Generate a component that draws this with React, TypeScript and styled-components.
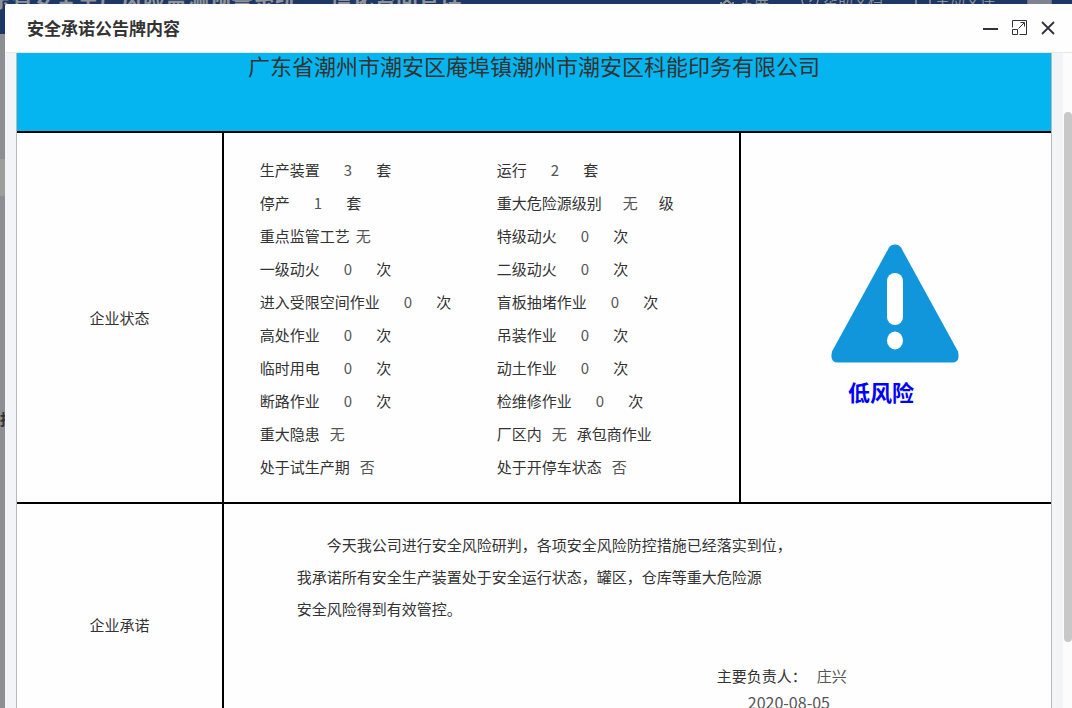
import React from "react";
import styled, { createGlobalStyle } from "styled-components";

const GlobalStyle = createGlobalStyle`
  * { box-sizing: border-box; }
  body {
    margin: 0;
    overflow: hidden;
    font-family: "Noto Sans CJK SC", "Noto Sans", sans-serif;
    font-size: 15px;
    color: #333;
  }
`;

const Screen = styled.div`
  position: relative;
  height: 100vh;
  overflow: hidden;
  background: #8d8e93;
`;

const TopBar = styled.header`
  display: flex;
  align-items: flex-start;
  justify-content: space-between;
  height: 34px;
  background: #1d3866;
  color: #8e9299;
  white-space: nowrap;
`;

const SystemName = styled.div`
  display: flex;
  gap: 33px;
  margin: -15px 0 0 -11px;
  font-size: 22px;
  line-height: 24px;
  font-weight: 700;
`;

const TopLinks = styled.nav`
  display: flex;
  gap: 32px;
  margin-top: -10px;
  padding-right: 20px;
  line-height: 20px;
`;

const TopLink = styled.a`
  display: flex;
  align-items: center;
  gap: 4px;
  color: inherit;
  text-decoration: none;
`;

const Avatar = styled.span`
  width: 25px;
  height: 20px;
  border: 1px solid #5d6f90;
  border-radius: 4px;
  background: #7d838f;
`;

const PageStripe = styled.div`
  height: 37px;
  margin-top: 125px;
  background: #9d9d9c;
`;

const PageLabel = styled.div`
  margin-top: 211px;
  line-height: 24px;
  font-weight: 700;
`;

const Dialog = styled.section`
  position: absolute;
  inset: 4px 0 0 5px;
  display: flex;
  flex-direction: column;
  background: #fefefe;
  border-top-left-radius: 2px;
  overflow: hidden;
`;

const TitleBar = styled.header`
  display: flex;
  flex: none;
  align-items: center;
  justify-content: space-between;
  height: 49px;
  padding: 0 15px 0 22px;
  border-bottom: 1px solid #e8e8e8;
`;

const Title = styled.h1`
  margin: 0;
  font-size: 17px;
  line-height: 24px;
  font-weight: 700;
`;

const WindowActions = styled.div`
  display: flex;
  gap: 13px;
`;

const IconButton = styled.button`
  display: flex;
  width: 16px;
  height: 16px;
  padding: 0;
  border: 0;
  background: none;
  color: #33303f;
`;

const DialogBody = styled.div`
  display: flex;
  flex: 1;
  min-height: 0;
  background: #f3f4f7;
`;

const Content = styled.main`
  flex: 1;
  min-width: 0;
  padding: 0 11px;
  overflow: hidden;
`;

const ScrollTrack = styled.div`
  flex: none;
  width: 9px;
  padding: 59px 0 0 1px;
  background: #fcfcfc;
`;

const ScrollThumb = styled.div`
  height: 530px;
  border-radius: 4px;
  background: #c8c8c8;
`;

const Board = styled.table`
  width: 100%;
  table-layout: fixed;
  border-collapse: separate;
  border-spacing: 0;
  border: 1px solid #b9b9b9;
  border-width: 0 1px;
  background: #fefefe;
`;

const Company = styled.th`
  height: 80px;
  padding: 0;
  border-bottom: 2px solid #000;
  background: #04b5f0;
  vertical-align: top;
  font-size: 22px;
  line-height: 24px;
  font-weight: 400;
`;

const RowLabel = styled.th`
  padding: 0;
  border: 0 solid #000;
  border-width: 0 2px 2px 0;
  font-weight: 400;
`;

const StatusCell = styled.td`
  padding: 20px 5px 19px 36px;
  border: 0 solid #000;
  border-width: 0 2px 2px 0;
`;

const StatusGrid = styled.div`
  display: grid;
  grid-template-columns: 1fr 1fr;
`;

const gaps = { wide: 24, medium: 21, small: 10, tiny: 6 };

const StatusItem = styled.div<{ $gap: keyof typeof gaps }>`
  display: flex;
  gap: ${(p) => gaps[p.$gap]}px;
  line-height: 33px;
  white-space: nowrap;
`;

const Value = styled.span`
  color: #555;
`;

const RiskCell = styled.td`
  padding: 15px 2px 0 0;
  border-bottom: 2px solid #000;
`;

const Risk = styled.div`
  display: flex;
  flex-direction: column;
  align-items: center;
  gap: 12px;
`;

const RiskLevel = styled.strong`
  padding-right: 28px;
  color: #00f;
  font-size: 22px;
  line-height: 32px;
  font-weight: 700;
`;

const PromiseCell = styled.td`
  padding: 25px 0 29px 73px;
  border-bottom: 2px solid #000;
`;

const Promise = styled.p`
  margin: 0;
  line-height: 32px;
  text-indent: 2em;
`;

const PromiseLine = styled.span`
  display: block;
  text-indent: 0;
`;

const Signature = styled.div`
  margin-top: 37px;
  padding-left: 420px;
  line-height: 27px;
`;

const Signer = styled.div`
  display: flex;
  gap: 10px;
`;

const SignDate = styled.time`
  display: block;
  padding-left: 31px;
  font-size: 16px;
  color: #555;
`;

type Item = [string, string, string?, (keyof typeof gaps)?];

const items: Item[] = [
  ["生产装置", "3", "套"],
  ["运行", "2", "套"],
  ["停产", "1", "套"],
  ["重大危险源级别", "无", "级", "medium"],
  ["重点监管工艺", "无", "", "tiny"],
  ["特级动火", "0", "次"],
  ["一级动火", "0", "次"],
  ["二级动火", "0", "次"],
  ["进入受限空间作业", "0", "次"],
  ["盲板抽堵作业", "0", "次"],
  ["高处作业", "0", "次"],
  ["吊装作业", "0", "次"],
  ["临时用电", "0", "次"],
  ["动土作业", "0", "次"],
  ["断路作业", "0", "次"],
  ["检维修作业", "0", "次"],
  ["重大隐患", "无", "", "small"],
  ["厂区内", "无", "承包商作业", "small"],
  ["处于试生产期", "否", "", "small"],
  ["处于开停车状态", "否", "", "small"],
];

const FullscreenIcon = () => (
  <svg width="16" height="16" viewBox="0 0 16 16" fill="none" stroke="currentColor" strokeWidth="2">
    <path d="M2 6V2h4M10 2h4v4M14 10v4h-4M6 14H2v-4M2 2l12 12M14 2L2 14" />
  </svg>
);

const HelpIcon = () => (
  <svg width="18" height="18" viewBox="0 0 18 18" fill="none" stroke="currentColor" strokeWidth="1.500">
    <circle cx="9" cy="9" r="8" />
    <path d="M6.500 7a2.500 2.500 0 1 1 3.500 2.300q-1 .5-1 1.700M9 12.500v1.500" />
  </svg>
);

const FileIcon = () => (
  <svg width="16" height="16" viewBox="0 0 16 16" fill="none" stroke="currentColor" strokeWidth="1.500">
    <path d="M1 3h14v10H10l-2 2-2-2H1z" />
  </svg>
);

const MinimizeIcon = () => (
  <svg width="16" height="16" viewBox="0 0 16 16">
    <path d="M0 9h15" stroke="currentColor" strokeWidth="2" />
  </svg>
);

const MaximizeIcon = () => (
  <svg width="16" height="16" viewBox="0 0 16 16" fill="none" stroke="currentColor" strokeWidth="1">
    <path d="M.5 7.500V.5h14v14H7.500M.5 9.500h5v5h-5zM6.500 8.500l5.500-5.500M8.500 2.500h4v4" />
  </svg>
);

const CloseIcon = () => (
  <svg width="16" height="16" viewBox="0 0 16 16">
    <path d="M1 2l12 12M13 2L1 14" stroke="currentColor" strokeWidth="1.800" />
  </svg>
);

const WarningIcon = () => (
  <svg width="128" height="119" viewBox="0 0 128 119">
    <path
      d="M58 3.500Q60 .5 64 .5T70 3.500L127 107.500Q129.500 118.500 121 118.500H7Q-1.500 118.500 1 107.500Z"
      fill="#1296db"
    />
    <rect x="56" y="29" width="16" height="52" rx="8" fill="#fff" />
    <ellipse cx="64" cy="96.500" rx="8" ry="9" fill="#fff" />
  </svg>
);

export default function App() {
  return (
    <Screen>
      <GlobalStyle />
      <TopBar>
        <SystemName>
          <span>东省安全生产风险监测预警系统</span>
          <span>信化咨问管理</span>
        </SystemName>
        <TopLinks>
          <TopLink href="#"><FullscreenIcon />全屏</TopLink>
          <TopLink href="#"><HelpIcon />帮助文档</TopLink>
          <TopLink href="#"><FileIcon />主动文件</TopLink>
          <Avatar />
        </TopLinks>
      </TopBar>
      <PageStripe />
      <PageLabel>报</PageLabel>
      <Dialog role="dialog" aria-labelledby="dialog-title">
        <TitleBar>
          <Title id="dialog-title">安全承诺公告牌内容</Title>
          <WindowActions>
            <IconButton aria-label="最小化"><MinimizeIcon /></IconButton>
            <IconButton aria-label="最大化"><MaximizeIcon /></IconButton>
            <IconButton aria-label="关闭"><CloseIcon /></IconButton>
          </WindowActions>
        </TitleBar>
        <DialogBody>
          <Content>
            <Board>
              <colgroup>
                <col style={{ width: "20%" }} />
                <col style={{ width: "50%" }} />
                <col style={{ width: "30%" }} />
              </colgroup>
              <thead>
                <tr>
                  <Company colSpan={3}>广东省潮州市潮安区庵埠镇潮州市潮安区科能印务有限公司</Company>
                </tr>
              </thead>
              <tbody>
                <tr>
                  <RowLabel scope="row">企业状态</RowLabel>
                  <StatusCell>
                    <StatusGrid>
                      {items.map(([label, value, unit, gap = "wide"]) => (
                        <StatusItem key={label} $gap={gap}>
                          <span>{label}</span>
                          <Value>{value}</Value>
                          {unit && <span>{unit}</span>}
                        </StatusItem>
                      ))}
                    </StatusGrid>
                  </StatusCell>
                  <RiskCell>
                    <Risk>
                      <WarningIcon />
                      <RiskLevel>低风险</RiskLevel>
                    </Risk>
                  </RiskCell>
                </tr>
                <tr>
                  <RowLabel scope="row">企业承诺</RowLabel>
                  <PromiseCell colSpan={2}>
                    <Promise>
                      今天我公司进行安全风险研判，各项安全风险防控措施已经落实到位，
                      <PromiseLine>我承诺所有安全生产装置处于安全运行状态，罐区，仓库等重大危险源</PromiseLine>
                      <PromiseLine>安全风险得到有效管控。</PromiseLine>
                    </Promise>
                    <Signature>
                      <Signer>
                        <span>主要负责人：</span>
                        <Value>庄兴</Value>
                      </Signer>
                      <SignDate dateTime="2020-08-05">2020-08-05</SignDate>
                    </Signature>
                  </PromiseCell>
                </tr>
              </tbody>
            </Board>
          </Content>
          <ScrollTrack>
            <ScrollThumb />
          </ScrollTrack>
        </DialogBody>
      </Dialog>
    </Screen>
  );
}
